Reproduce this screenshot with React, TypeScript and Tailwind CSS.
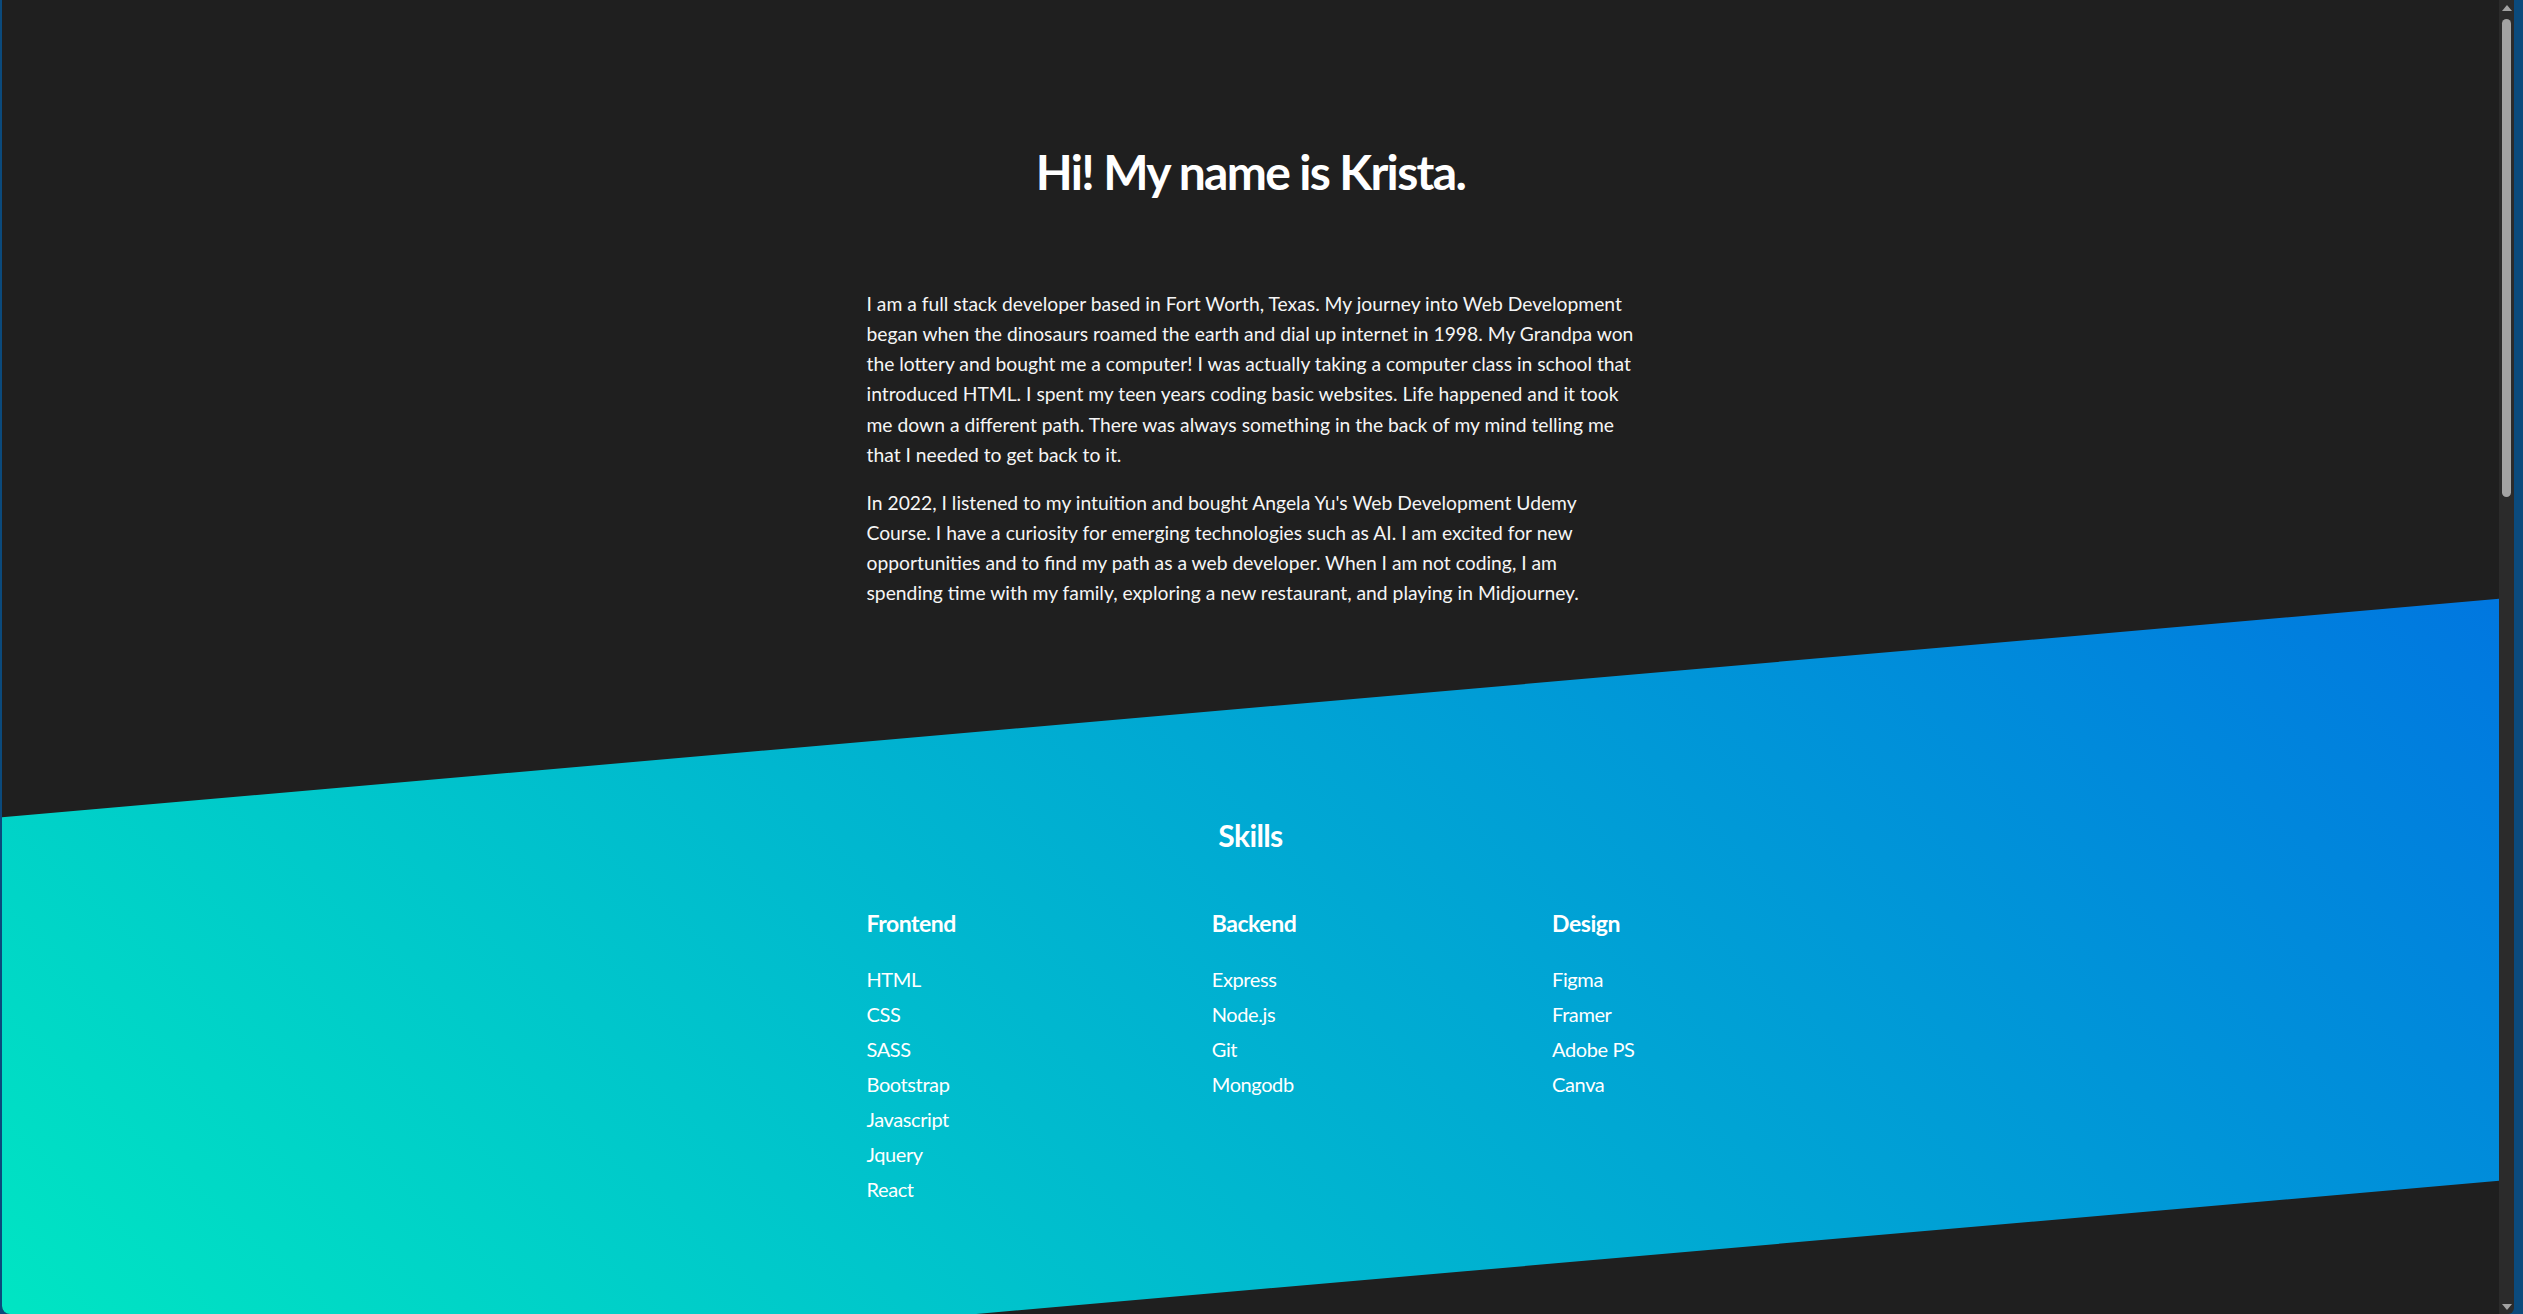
import React from 'react';

const skills = [
  { title: 'Frontend', items: ['HTML', 'CSS', 'SASS', 'Bootstrap', 'Javascript', 'Jquery', 'React'] },
  { title: 'Backend', items: ['Express', 'Node.js', 'Git', 'Mongodb'] },
  { title: 'Design', items: ['Figma', 'Framer', 'Adobe PS', 'Canva'] },
];

const Scrollbar = () => (
  <div className="w-[15px] h-full bg-[#2b2b2b] rounded-br-md flex flex-col items-center">
    <div className="h-[15px] flex items-center justify-center">
      <div className="w-0 h-0 border-l-[5px] border-r-[5px] border-b-[6px] border-l-transparent border-r-transparent border-b-[#a3a3a3]" />
    </div>
    <div className="w-[9px] h-[478px] mt-[4px] rounded-full bg-[#a3a3a3]" />
    <div className="flex-1" />
    <div className="h-[15px] flex items-center justify-center">
      <div className="w-0 h-0 border-l-[5px] border-r-[5px] border-t-[6px] border-l-transparent border-r-transparent border-t-[#a3a3a3]" />
    </div>
  </div>
);

export default function App() {
  return (
    <div className="h-[1314px] w-full flex bg-[#0b4a7c] overflow-hidden font-['Lato',sans-serif]">
      <main className="ml-[2px] flex-1 h-full overflow-hidden bg-[#1f1f1f] rounded-bl-lg text-[#f5f5f5]">
        {/* About */}
        <section className="h-[708px] pt-[143px]">
          <h1 className="text-center text-[48px] leading-[1.2] font-bold tracking-[-0.035em] text-white mb-[88px]">
            Hi! My name is Krista.
          </h1>
          <div className="max-w-[768px] mx-auto text-[19.3px] leading-[30.25px]">
            <p className="mb-[17.5px]">
              I am a full stack developer based in Fort Worth, Texas. My journey into Web Development began when
              the dinosaurs roamed the earth and dial up internet in 1998. My Grandpa won the lottery and bought me a
              computer! I was actually taking a computer class in school that introduced HTML. I spent my teen years
              coding basic websites. Life happened and it took me down a different path. There was always something
              in the back of my mind telling me that I needed to get back to it.
            </p>
            <p>
              In 2022, I listened to my intuition and bought Angela Yu's Web Development Udemy Course. I have a
              curiosity for emerging technologies such as AI. I am excited for new opportunities and to find my path
              as a web developer. When I am not coding, I am spending time with my family, exploring a new
              restaurant, and playing in Midjourney.
            </p>
          </div>
        </section>

        {/* Skills */}
        <section className="h-[582px] -skew-y-5 bg-[linear-gradient(45deg,#00e8c2,#0077e0)]">
          <div className="w-full skew-y-5 pt-[109px]">
            <div className="max-w-[768px] mx-auto text-white">
              <h2 className="text-center text-[30px] leading-[36px] font-bold tracking-[-0.02em] mb-[57px]">Skills</h2>
              <div className="flex justify-between">
                {skills.map((col) => (
                  <div key={col.title}>
                    <h3 className="text-[23px] leading-[27.6px] font-bold tracking-[-0.02em] mb-[24px]">{col.title}</h3>
                    <ul>
                      {col.items.map((item) => (
                        <li key={item} className="text-[20px] leading-[35px] tracking-[-0.02em]">
                          {item}
                        </li>
                      ))}
                    </ul>
                  </div>
                ))}
              </div>
            </div>
          </div>
        </section>

        <section className="h-[600px]" />
      </main>
      <Scrollbar />
      <div className="w-[9px]" />
    </div>
  );
}
